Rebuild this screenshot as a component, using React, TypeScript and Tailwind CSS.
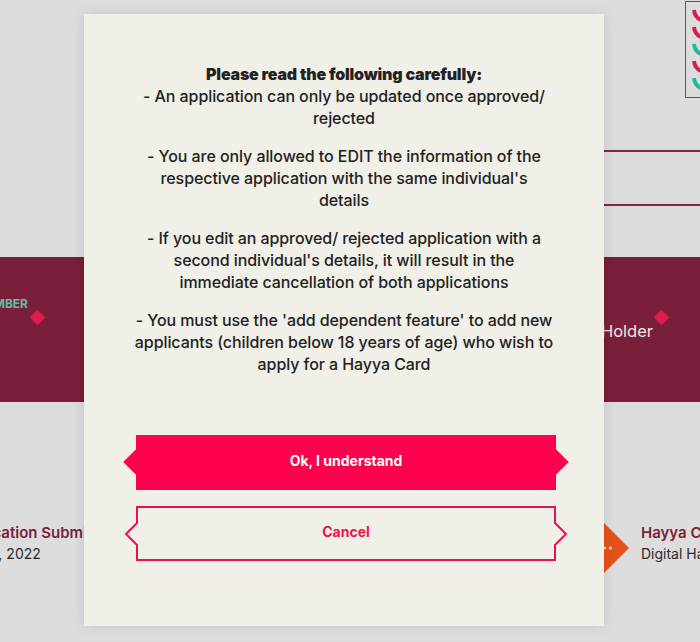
const rules = [
  ["- An application can only be updated once approved/ rejected"],
  ["- You are only allowed to EDIT the information of the respective application with the same individual's details"],
  ["- If you edit an approved/ rejected application with a second individual's details, it will result in the immediate cancellation of both applications"],
  ["- You must use the 'add dependent feature' to add new applicants (children below 18 years of age) who wish to apply for a Hayya Card"],
];

const checks = ["#d81e50", "#d81e50", "#22b89c", "#d81e50", "#22b89c"];

const Background = () => {
  return (
    <div className="flex h-full flex-col">
      {/* top right card */}
      <div className="mt-px h-[97px] w-[15px] self-end bg-[#c9245a] py-px pl-px">
        <div className="flex h-full flex-col gap-[3px] overflow-hidden bg-[#dddddd] pl-[6px] pt-[6px]">
          {checks.map((color, i) => (
            <svg key={i} width="14" height="14" viewBox="0 0 14 14" className="shrink-0">
              <path d="M2 2 C2.5 7 4.5 10 9 12 L14 4" fill="none" stroke={color} strokeWidth="4" />
            </svg>
          ))}
        </div>
      </div>

      {/* rows behind modal */}
      <div className="mt-[52px] ml-auto h-[2px] w-[96px] bg-[#8a2344]" />
      <div className="mt-[52px] ml-auto h-[2px] w-[96px] bg-[#8a2344]" />

      {/* band */}
      <div className="mt-[51px] flex h-[145px] bg-[#7a1f3a]">
        <div className="relative w-[84px]">
          <span className="absolute right-[56px] top-[38px] font-['Inter',sans-serif] text-[12px] font-bold leading-[18px] text-[#63bda3]">NUMBER</span>
          <div className="absolute left-[32px] top-[55px] h-[11px] w-[11px] rotate-45 bg-[#e3194f]" />
        </div>
        <div className="ml-auto flex items-start pt-[52px]">
          <span className="mt-[10px] font-['Inter',sans-serif] text-[16.5px] leading-[24px] text-[#f3e6e6]">Holder</span>
          <div className="ml-[3px] mt-[3px] mr-[33px] h-[11px] w-[11px] rotate-45 bg-[#e3194f]" />
        </div>
      </div>

      {/* timeline */}
      <div className="mt-[121px] flex">
        <div className="flex w-[84px] flex-col overflow-hidden whitespace-nowrap font-['Inter',sans-serif]">
          <div className="ml-[-45px] text-[15px] font-semibold leading-[20px] text-[#7a1f3a]">Application Submitted</div>
          <div className="ml-[-49px] mt-[1px] text-[14px] leading-[20px] text-[#2a2a2a]">Nov 24, 2022</div>
        </div>
        <div className="ml-[520px] flex w-[96px] items-start whitespace-nowrap font-['Inter',sans-serif]">
          <svg width="25" height="50" viewBox="0 0 25 50" className="shrink-0">
            <path d="M0 0 L25 25 L0 50 Z" fill="#e4521b" />
            <circle cx="1" cy="25" r="1.3" fill="#f7d8c8" />
            <circle cx="6.5" cy="25" r="1.6" fill="#f7d8c8" />
          </svg>
          <div className="ml-[12px]">
            <div className="text-[15px] font-semibold leading-[20px] text-[#7a1f3a]">Hayya Card</div>
            <div className="mt-[1px] text-[14px] leading-[20px] text-[#2a2a2a]">Digital Hayya</div>
          </div>
        </div>
      </div>
    </div>
  );
};

const App = () => {
  return (
    <div className="relative h-[642px] w-[700px] overflow-hidden bg-[#dddddd]">
      <Background />

      {/* Modal */}
      <div className="absolute left-[84px] top-[14px] flex h-[612px] w-[520px] flex-col items-center bg-[#f0efe8] pt-[49px] font-['Inter',sans-serif] shadow-[0_0_12px_rgba(0,0,0,0.12)]">
        <div className="flex w-[420px] flex-col gap-4 text-center text-[16px] font-medium leading-[22px] tracking-[-0.08px] text-[#222222]">
          {rules.map((r, i) => (
            <p key={i}>
              {i === 0 && <strong className="block font-black tracking-[-0.2px]">Please read the following carefully:</strong>}
              {r[0]}
            </p>
          ))}
        </div>

        <button className="relative ml-[4px] mt-[60px] flex h-[55px] w-[420px] shrink-0 items-center justify-center bg-[#ff004f] pb-[5px] text-[14px] font-bold text-white">
          <span className="absolute left-[-9px] top-[18px] h-[18px] w-[18px] rotate-45 bg-[#ff004f]" />
          <span className="relative">Ok, I understand</span>
          <span className="absolute right-[-9px] top-[18px] h-[18px] w-[18px] rotate-45 bg-[#ff004f]" />
        </button>

        <button className="relative ml-[4px] mt-[16px] flex h-[55px] w-[420px] shrink-0 items-center justify-center pb-[5px] text-[14px] font-bold text-[#ef0f50]">
          <svg width="444" height="57" viewBox="0 0 444 57" className="absolute left-[-12px] top-0">
            <path
              d="M13 1 H431 V17 L442 28 L431 39 V54 H13 V39 L2 28 L13 17 Z"
              fill="none"
              stroke="#ef0f50"
              strokeWidth="2"
            />
          </svg>
          <span className="relative">Cancel</span>
        </button>
      </div>
    </div>
  );
};

export default App;
